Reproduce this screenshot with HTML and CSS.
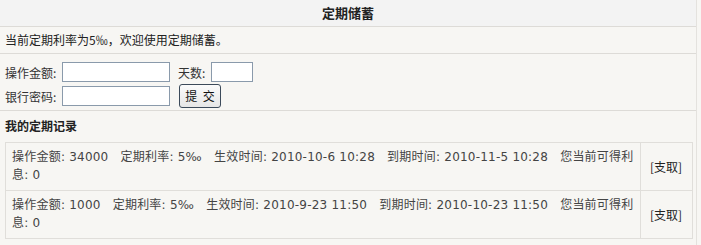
FILE: index.html
```html
<!DOCTYPE html>
<html lang="zh">
<head>
<meta charset="utf-8">
<title>定期储蓄</title>
<link rel="stylesheet" href="styles.css">
</head>
<body>
<div class="panel">
  <div class="head">定期储蓄</div>
  <div class="intro">当前定期利率为5‰，欢迎使用定期储蓄。</div>
  <div class="form">
    <div class="frow">
      <span class="lbl">操作金额:</span><span class="inp wide"></span>
      <span class="lbl lbl2">天数:</span><span class="inp narrow"></span>
    </div>
    <div class="frow">
      <span class="lbl">银行密码:</span><span class="inp wide"></span>
      <span class="btn">提 交</span>
    </div>
  </div>
  <div class="title">我的定期记录</div>
  <div class="tablewrap">
    <table class="records">
      <tr>
        <td class="info">操作金额: 34000&nbsp;&nbsp;&nbsp;定期利率: 5‰&nbsp;&nbsp;&nbsp;生效时间: 2010-10-6 10:28&nbsp;&nbsp;&nbsp;到期时间: 2010-11-5 10:28&nbsp;&nbsp;&nbsp;您当前可得利息: 0</td>
        <td class="act">[支取]</td>
      </tr>
      <tr>
        <td class="info">操作金额: 1000&nbsp;&nbsp;&nbsp;定期利率: 5‰&nbsp;&nbsp;&nbsp;生效时间: 2010-9-23 11:50&nbsp;&nbsp;&nbsp;到期时间: 2010-10-23 11:50&nbsp;&nbsp;&nbsp;您当前可得利息: 0</td>
        <td class="act">[支取]</td>
      </tr>
    </table>
  </div>
</div>
</body>
</html>
```
FILE: styles.css
```css
html, body {
  margin: 0;
  padding: 0;
  background: #f7f6f3;
}
body {
  font-family: "Noto Sans CJK SC", "DejaVu Sans", sans-serif;
  font-size: 12px;
  color: #333;
}
.panel {
  width: 697px;
  height: 245px;
  border-right: 1px solid #e4e2de;
  box-sizing: border-box;
}
.head {
  height: 26px;
  line-height: 26px;
  background: #f3f3f3;
  border-bottom: 1px solid #dddbd7;
  text-align: center;
  font-weight: bold;
  font-size: 13px;
  color: #222;
}
.intro {
  height: 26px;
  line-height: 26px;
  padding-left: 5px;
  border-bottom: 1px solid #dddbd7;
  color: #222;
}
.form {
  height: 57px;
  box-sizing: border-box;
  padding: 6px 0 0 5px;
  border-bottom: 1px solid #dddbd7;
}
.frow {
  display: flex;
  align-items: center;
  height: 24px;
}
.lbl {
  width: 57px;
  color: #333;
}
.lbl2 {
  width: 33px;
  margin-left: 8px;
}
.inp {
  display: block;
  height: 20px;
  box-sizing: border-box;
  border: 1px solid #8a9aab;
  background: #fff;
}
.wide { width: 108px; }
.narrow { width: 42px; }
.btn {
  margin-left: 9px;
  width: 42px;
  height: 24px;
  box-sizing: border-box;
  border: 1px solid #3c4a5a;
  border-radius: 3px;
  background: linear-gradient(#fbfbfb, #e6e6e6);
  text-align: center;
  line-height: 22px;
  word-spacing: 3px;
  color: #111;
}
.title {
  height: 31px;
  line-height: 30px;
  padding-left: 5px;
  font-weight: bold;
  color: #222;
}
.tablewrap {
  padding-left: 5px;
}
.records {
  width: 688px;
  border-collapse: collapse;
  font-family: "DejaVu Sans", "Noto Sans CJK SC", sans-serif;
  font-size: 12px;
}
.records td {
  border: 1px solid #e0deda;
  line-height: 18px;
}
.info {
  padding: 5px 6px 6px 6px;
  letter-spacing: 0.22px;
  color: #444;
}
.act {
  width: 38px;
  padding: 0 4px 0 9px;
  font-family: "Noto Sans CJK SC", sans-serif;
  color: #222;
}
```
